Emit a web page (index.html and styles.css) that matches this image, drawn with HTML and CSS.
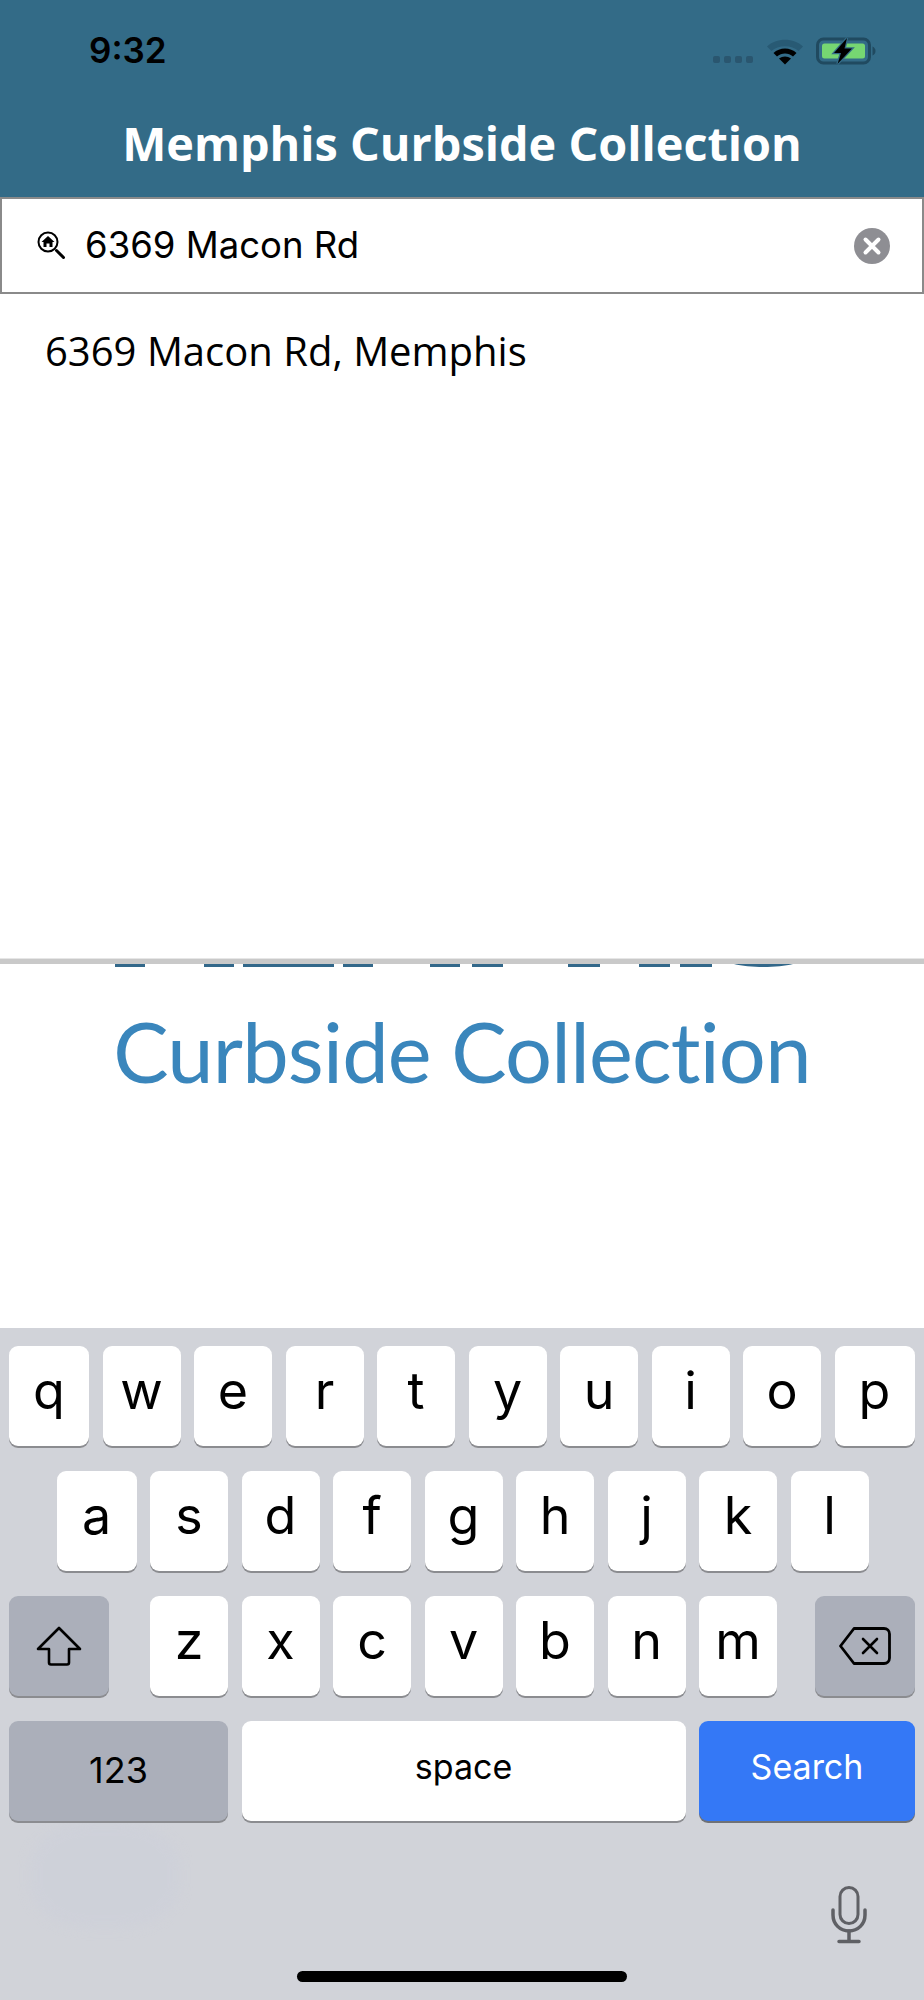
FILE: index.html
```html
<!DOCTYPE html>
<html lang="en">
<head>
<meta charset="UTF-8">
<title>Memphis Curbside Collection</title>
<link rel="stylesheet" href="styles.css">
</head>
<body>
	<div class="page">
		<header class="top">
			<div class="status">
				<span class="time">9:32</span>
				<div class="status-icons">
					<div class="cell"><i></i><i></i><i></i><i></i></div>
					<svg class="wifi" width="38" height="28" viewBox="0 0 38 28">
						<path d="M1 9.5C10 0.5 28 0.5 37 9.5L32.5 14C26 7.500 12 7.500 5.500 14Z" fill="#285a74"/>
						<path d="M7.500 16C13.500 10 24.500 10 30.500 16L27 19.500C22.500 15.500 15.500 15.500 11 19.500Z" fill="#000"/>
						<path d="M13 21.500C16.500 18.800 21.500 18.800 25 21.500L19 27.500Z" fill="#000"/>
					</svg>
					<svg class="battery" width="60" height="28" viewBox="0 0 60 28">
						<rect x="1.500" y="2" width="52" height="24" rx="6" fill="none" stroke="#204a60" stroke-width="3"/>
						<rect x="6" y="6.500" width="43" height="15" rx="2.500" fill="#76d672"/>
						<path d="M56.500 9.500C58.500 10.500 59.500 12 59.500 14C59.500 16 58.500 17.500 56.500 18.500Z" fill="#204a60"/>
						<path d="M31 1L18 16H25L21.500 27L36 11.500H28.500Z" fill="#000" stroke="#336b87" stroke-width="2.500" paint-order="stroke"/>
					</svg>
				</div>
			</div>
			<h1 class="title">Memphis Curbside Collection</h1>
		</header>

		<div class="search">
			<svg class="search-icon" width="34" height="34" viewBox="0 0 34 34">
				<circle cx="13" cy="13" r="9.500" fill="none" stroke="#000" stroke-width="2"/>
				<path d="M13 7L6.500 13H8.500V18H11.500V14.500H14.500V18H17.500V13H19.500Z" fill="#000"/>
				<path d="M21.500 21.500L28.500 28.500" stroke="#000" stroke-width="3" stroke-linecap="round"/>
			</svg>
			<span class="search-text">6369 Macon Rd</span>
			<svg class="clear" width="36" height="36" viewBox="0 0 36 36">
				<circle cx="18" cy="18" r="18" fill="#8e8e93"/>
				<path d="M11.500 11.500L24.500 24.500M24.500 11.500L11.500 24.500" stroke="#fff" stroke-width="4" stroke-linecap="round"/>
			</svg>
		</div>

		<div class="results">
			<div class="result">6369 Macon Rd, Memphis</div>
		</div>

		<div class="divider"></div>

		<div class="logo">
			<svg class="logo-cut" width="924" height="3" viewBox="0 0 924 3">
				<g fill="#33688a">
					<rect x="115" width="30" height="3"/>
					<rect x="204" width="30" height="3"/>
					<rect x="243" width="91" height="3"/>
					<rect x="343" width="30" height="3"/>
					<rect x="430" width="30" height="3"/>
					<rect x="472" width="31" height="3"/>
					<rect x="568" width="32" height="3"/>
					<rect x="639" width="31" height="3"/>
					<rect x="680" width="32" height="3"/>
					<path d="M734 0H793C778 4 749 4 734 0Z"/>
				</g>
			</svg>
			<div class="logo-text">Curbside Collection</div>
		</div>

		<div class="keyboard">
			<div class="blob"></div>
			<div class="row">
				<div class="key wide">q</div><div class="key">w</div><div class="key">e</div><div class="key">r</div><div class="key">t</div><div class="key">y</div><div class="key">u</div><div class="key">i</div><div class="key">o</div><div class="key wide">p</div>
			</div>
			<div class="row row-home">
				<div class="key wide">a</div><div class="key">s</div><div class="key">d</div><div class="key">f</div><div class="key">g</div><div class="key">h</div><div class="key">j</div><div class="key">k</div><div class="key">l</div>
			</div>
			<div class="row">
				<div class="key fn shift">
					<svg width="46" height="40" viewBox="0 0 46 40">
						<path d="M23 2L44 23H33V36.500A2 2 0 0 1 31 38.500H15A2 2 0 0 1 13 36.500V23H2Z" fill="none" stroke="#000" stroke-width="2.600" stroke-linejoin="round"/>
					</svg>
				</div>
				<div class="key">z</div><div class="key">x</div><div class="key">c</div><div class="key">v</div><div class="key">b</div><div class="key">n</div><div class="key">m</div>
				<div class="key fn delete">
					<svg width="52" height="38" viewBox="0 0 52 38">
						<path d="M15 1.500H45A5.500 5.500 0 0 1 50.500 7V31A5.500 5.500 0 0 1 45 36.500H15L1.500 19Z" fill="none" stroke="#000" stroke-width="2.800" stroke-linejoin="round"/>
						<path d="M24 12L38 26M38 12L24 26" stroke="#000" stroke-width="2.600" stroke-linecap="round"/>
					</svg>
				</div>
			</div>
			<div class="row">
				<div class="key fn small num">123</div>
				<div class="key small space">space</div>
				<div class="key small go">Search</div>
			</div>
			<svg class="mic" width="36" height="58" viewBox="0 0 36 58">
				<rect x="9" y="1.500" width="18" height="36" rx="9" fill="none" stroke="#5f6065" stroke-width="3"/>
				<path d="M2 24V29C2 38 9 45 18 45C27 45 34 38 34 29V24" fill="none" stroke="#5f6065" stroke-width="3.500" stroke-linecap="round"/>
				<path d="M18 45V55M8 55.500H28" stroke="#5f6065" stroke-width="3.500" stroke-linecap="round"/>
			</svg>
			<div class="home-bar"></div>
		</div>
	</div>
</body>
</html>
```

FILE: styles.css
```css
*{
	box-sizing:border-box;
}
body{
	margin:0;
	background:#fff;
}
.page{
	width:924px;
	height:2000px;
	display:flex;
	flex-direction:column;
	overflow:hidden;
}
.top{
	height:197px;
	background:#336b87;
}
.status{
	height:124px;
	padding:29px 48px 0 89px;
	display:flex;
	justify-content:space-between;
}
.time{
	font:600 35px/42px Inter,"Liberation Sans",sans-serif;
	color:#000;
}
.status-icons{
	display:flex;
	align-items:flex-start;
	padding-top:8px;
}
.cell{
	display:flex;
	gap:4px;
	margin:19px 13px 0 0;
}
.cell i{
	width:7px;
	height:7px;
	border-radius:2px;
	background:#2a566f;
}
.wifi{
	margin-right:12px;
}
.title{
	margin:-8px 0 0;
	font:700 46.800px/54px "Open Sans",sans-serif;
	color:#fff;
	text-align:center;
}
.search{
	height:97px;
	border:2px solid #8a8a8a;
	display:flex;
	align-items:center;
	padding-left:33px;
	padding-right:32px;
}
.search-icon{
	margin-right:16px;
}
.search-text{
	flex:1;
	padding-bottom:2px;
	font:400 36.500px/48px Inter,"Liberation Sans",sans-serif;
	color:#000;
}
.results{
	height:664px;
	padding:31px 0 0 45px;
}
.result{
	font:400 40px/52px "Open Sans",sans-serif;
	color:#000;
}
.divider{
	height:6px;
	background:#c9c9c9;
	border-top:1px solid #e6e6e6;
}
.logo{
	height:364px;
}
.logo-cut{
	display:block;
}
.logo-text{
	margin-top:34px;
	font:400 83px/100px Lato,sans-serif;
	font-variant-ligatures:none;
	letter-spacing:-0.8px;
	color:#3a86bc;
	text-align:center;
}
.keyboard{
	position:relative;
	height:672px;
	padding-top:18px;
	background:#d1d3d9;
}
.blob{
	position:absolute;
	left:30px;
	top:495px;
	width:150px;
	height:105px;
	border-radius:40%;
	background:#cdd0da;
	opacity:.6;
	filter:blur(6px);
}
.row{
	position:relative;
	display:flex;
	gap:13.5px;
	height:100px;
	margin-bottom:25px;
	padding-left:9px;
}
.row-home{
	padding-left:56.500px;
}
.key{
	width:78px;
	height:100px;
	border-radius:9px;
	background:#fff;
	box-shadow:0 2px 0 #8b8c90;
	display:flex;
	align-items:center;
	justify-content:center;
	padding-bottom:10px;
	font:370 52px/60px Inter,"Liberation Sans",sans-serif;
	color:#000;
}
.wide{
	width:80px;
}
.fn{
	background:#abafba;
	padding-bottom:0;
}
.shift{
	width:100px;
	margin-right:27.500px;
}
.delete{
	width:100px;
	margin-left:24.500px;
}
.small{
	font-size:34px;
	font-weight:400;
	padding-bottom:8px;
}
.num{
	width:219px;
	padding-bottom:2px;
	font-size:36px;
}
.space{
	width:444px;
}
.go{
	width:216px;
	background:#3478f6;
	color:#fff;
	box-shadow:0 2px 0 #6f7176;
}
.mic{
	position:relative;
	display:block;
	margin:65px 0 0 831px;
}
.home-bar{
	width:330px;
	height:11px;
	margin:27px auto 0;
	border-radius:6px;
	background:#000;
}
```
